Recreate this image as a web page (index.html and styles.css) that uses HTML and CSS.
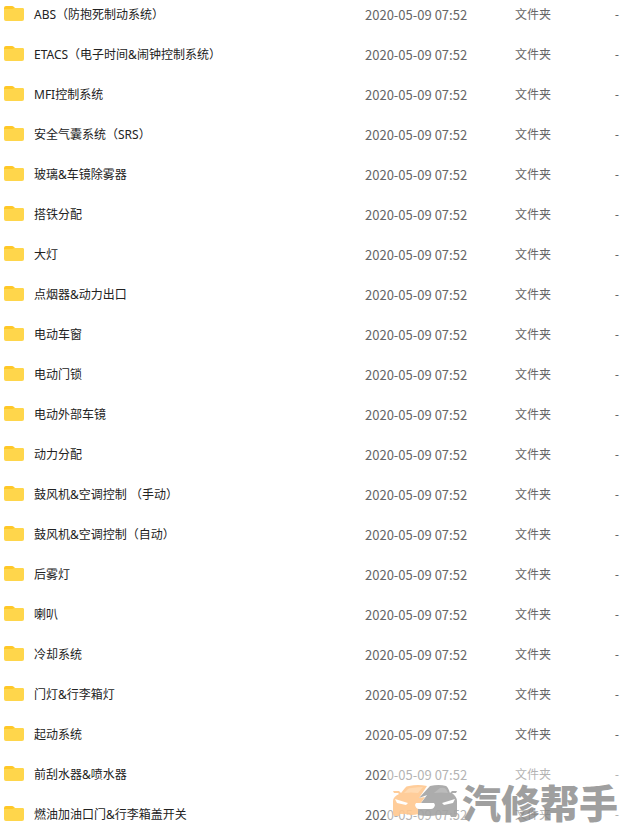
FILE: index.html
```html
<!DOCTYPE html>
<html lang="zh-CN">

<head>
	<meta charset="UTF-8">
	<title>文件列表</title>
	<link rel="stylesheet" href="styles.css">
</head>

<body>

	<!-- folder icon, reused in every row -->
	<svg class="defs" width="0" height="0">
		<symbol id="folder" viewBox="0 0 20 15">
			<path d="M0 2q0-2 2-2h6q1 0 2 1l1 1h7q2 0 2 2v6H0z" fill="#ffc827" />
			<path d="M0 3h8q1 0 2-1h8q2 0 2 2v9q0 2-2 2H2q-2 0-2-2z" fill="#ffd64b" />
		</symbol>
	</svg>

	<div class="container">

		<table class="files">
			<colgroup>
				<col>
				<col class="col-date">
				<col class="col-type">
				<col class="col-size">
			</colgroup>
			<tbody>
				<tr>
					<td><a href="#"><svg class="icon"><use href="#folder" /></svg>ABS（防抱死制动系统）</a></td>
					<td class="date">2020-05-09 07:52</td>
					<td>文件夹</td>
					<td>-</td>
				</tr>
				<tr>
					<td><a href="#"><svg class="icon"><use href="#folder" /></svg>ETACS（电子时间&amp;闹钟控制系统）</a></td>
					<td class="date">2020-05-09 07:52</td>
					<td>文件夹</td>
					<td>-</td>
				</tr>
				<tr>
					<td><a href="#"><svg class="icon"><use href="#folder" /></svg>MFI控制系统</a></td>
					<td class="date">2020-05-09 07:52</td>
					<td>文件夹</td>
					<td>-</td>
				</tr>
				<tr>
					<td><a href="#"><svg class="icon"><use href="#folder" /></svg>安全气囊系统（SRS）</a></td>
					<td class="date">2020-05-09 07:52</td>
					<td>文件夹</td>
					<td>-</td>
				</tr>
				<tr>
					<td><a href="#"><svg class="icon"><use href="#folder" /></svg>玻璃&amp;车镜除雾器</a></td>
					<td class="date">2020-05-09 07:52</td>
					<td>文件夹</td>
					<td>-</td>
				</tr>
				<tr>
					<td><a href="#"><svg class="icon"><use href="#folder" /></svg>搭铁分配</a></td>
					<td class="date">2020-05-09 07:52</td>
					<td>文件夹</td>
					<td>-</td>
				</tr>
				<tr>
					<td><a href="#"><svg class="icon"><use href="#folder" /></svg>大灯</a></td>
					<td class="date">2020-05-09 07:52</td>
					<td>文件夹</td>
					<td>-</td>
				</tr>
				<tr>
					<td><a href="#"><svg class="icon"><use href="#folder" /></svg>点烟器&amp;动力出口</a></td>
					<td class="date">2020-05-09 07:52</td>
					<td>文件夹</td>
					<td>-</td>
				</tr>
				<tr>
					<td><a href="#"><svg class="icon"><use href="#folder" /></svg>电动车窗</a></td>
					<td class="date">2020-05-09 07:52</td>
					<td>文件夹</td>
					<td>-</td>
				</tr>
				<tr>
					<td><a href="#"><svg class="icon"><use href="#folder" /></svg>电动门锁</a></td>
					<td class="date">2020-05-09 07:52</td>
					<td>文件夹</td>
					<td>-</td>
				</tr>
				<tr>
					<td><a href="#"><svg class="icon"><use href="#folder" /></svg>电动外部车镜</a></td>
					<td class="date">2020-05-09 07:52</td>
					<td>文件夹</td>
					<td>-</td>
				</tr>
				<tr>
					<td><a href="#"><svg class="icon"><use href="#folder" /></svg>动力分配</a></td>
					<td class="date">2020-05-09 07:52</td>
					<td>文件夹</td>
					<td>-</td>
				</tr>
				<tr>
					<td><a href="#"><svg class="icon"><use href="#folder" /></svg>鼓风机&amp;空调控制 （手动）</a></td>
					<td class="date">2020-05-09 07:52</td>
					<td>文件夹</td>
					<td>-</td>
				</tr>
				<tr>
					<td><a href="#"><svg class="icon"><use href="#folder" /></svg>鼓风机&amp;空调控制（自动）</a></td>
					<td class="date">2020-05-09 07:52</td>
					<td>文件夹</td>
					<td>-</td>
				</tr>
				<tr>
					<td><a href="#"><svg class="icon"><use href="#folder" /></svg>后雾灯</a></td>
					<td class="date">2020-05-09 07:52</td>
					<td>文件夹</td>
					<td>-</td>
				</tr>
				<tr>
					<td><a href="#"><svg class="icon"><use href="#folder" /></svg>喇叭</a></td>
					<td class="date">2020-05-09 07:52</td>
					<td>文件夹</td>
					<td>-</td>
				</tr>
				<tr>
					<td><a href="#"><svg class="icon"><use href="#folder" /></svg>冷却系统</a></td>
					<td class="date">2020-05-09 07:52</td>
					<td>文件夹</td>
					<td>-</td>
				</tr>
				<tr>
					<td><a href="#"><svg class="icon"><use href="#folder" /></svg>门灯&amp;行李箱灯</a></td>
					<td class="date">2020-05-09 07:52</td>
					<td>文件夹</td>
					<td>-</td>
				</tr>
				<tr>
					<td><a href="#"><svg class="icon"><use href="#folder" /></svg>起动系统</a></td>
					<td class="date">2020-05-09 07:52</td>
					<td>文件夹</td>
					<td>-</td>
				</tr>
				<tr>
					<td><a href="#"><svg class="icon"><use href="#folder" /></svg>前刮水器&amp;喷水器</a></td>
					<td class="date">2020-05-09 07:52</td>
					<td>文件夹</td>
					<td>-</td>
				</tr>
				<tr>
					<td><a href="#"><svg class="icon"><use href="#folder" /></svg>燃油加油口门&amp;行李箱盖开关</a></td>
					<td class="date">2020-05-09 07:52</td>
					<td>文件夹</td>
					<td>-</td>
				</tr>
			</tbody>
		</table>

		<div class="watermark">
			<svg class="cars" viewBox="0 0 66 32">
				<!-- orange car -->
				<path d="M1 6h6l2 2 4-5q1-2 4-2 9-2 18 0l-8 12 6-1-7 10v7q-6 2-12 0H8l-1 2H2q-1-1-1-3V16q0-4 6-7l-1-1H2z" fill="#ffc890" />
				<path d="M12 8l4-4q1-1 4-1 6-1 11-1l-5 6q-7-1-14 0z" fill="#ffd6aa" />
				<!-- grey car -->
				<path d="M38 1q9-2 16 0 2 1 4 7l2-2h5l-1 2h-4q5 4 5 8v13q0 2-1 3h-5l-1-2H46q-9 2-20 0v-8l9-12-8 3z" fill="#a4a4a4" />
				<path d="M42 8l6-5q4-1 6 1l2 4q-7-1-14 0z" fill="#b4b4b4" />
				<path d="M3 14l13 4-2 2-9-2zM63 14l-13 4 2 2 9-2zM24 18h18l1 2q-1 4-4 4H27q-3 0-4-4z" fill="#fff" />
			</svg>
			<span class="brand">汽修帮手</span>
		</div>

	</div> <!-- end container -->

</body>

</html>
```
FILE: styles.css
```css
body {
	background: #fff;
	color: #666;
	font: 12px/30px 'Noto Sans', 'Noto Sans CJK SC', sans-serif;
	margin: 0;
}

.defs {
	position: absolute;
}

.container {
	height: 100vh;
	overflow: hidden;
	position: relative;
}

.files {
	border-collapse: collapse;
	table-layout: fixed;
	width: 100%;
}

.files td {
	height: 30px;
	padding: 0 0 10px;
	white-space: nowrap;
}

.col-date {
	width: 150px;
}

.col-type {
	width: 100px;
}

.col-size {
	width: 11px;
}

.files a {
	align-items: center;
	color: #222;
	display: flex;
	padding-left: 4px;
	text-decoration: none;
	white-space: pre;
}

.files .date {
	font-family: 'Noto Sans CJK SC', sans-serif;
	font-size: 13px;
	line-height: 28px;
}

.icon {
	height: 15px;
	margin: 0 10px 4px 0;
	width: 20px;
}

.watermark {
	align-items: center;
	background: rgba(255, 255, 255, .5);
	bottom: 0;
	box-sizing: border-box;
	display: flex;
	height: 64px;
	padding: 10px 4px 0 5px;
	position: absolute;
	right: 0;
	width: 239px;
}

.cars {
	flex: none;
	height: 32px;
	opacity: .9;
	width: 66px;
}

.brand {
	color: rgba(128, 128, 128, .75);
	font-family: 'Noto Sans CJK SC', sans-serif;
	font-size: 39px;
	font-weight: 900;
	line-height: 36px;
	margin-left: 4px;
}
```
